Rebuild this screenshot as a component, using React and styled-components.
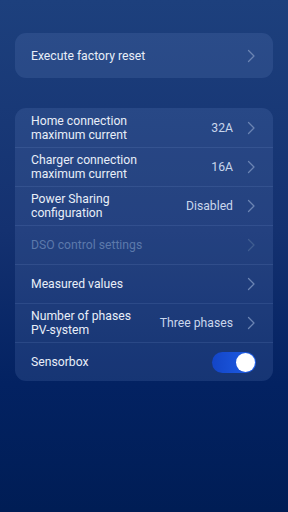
import React, { useState } from "react";
import styled, { createGlobalStyle } from "styled-components";

const GlobalStyle = createGlobalStyle`
  html, body {
    margin: 0;
    padding: 0;
  }
  body {
    font-family: Roboto, "Liberation Sans", sans-serif;
    -webkit-font-smoothing: antialiased;
  }
`;

const Screen = styled.div`
  width: 288px;
  height: 512px;
  box-sizing: border-box;
  padding: 33px 15px 0;
  background: linear-gradient(180deg, #1d407d 0%, #143170 45%, #032262 75%, #001d55 100%);
  display: flex;
  flex-direction: column;
  gap: 30px;
`;

const Card = styled.div`
  background: rgba(120, 150, 210, 0.17);
  border-radius: 11px;
  overflow: hidden;
  display: flex;
  flex-direction: column;
`;

const Row = styled.div`
  height: ${(p) => p.$h || 39}px;
  box-sizing: border-box;
  display: flex;
  align-items: center;
  padding: 0 17px 0 16px;
  border-top: ${(p) => (p.$first ? "none" : "1px solid rgba(140, 170, 225, 0.14)")};
  color: ${(p) => (p.$disabled ? "#5c79ab" : "#e8eef8")};
  font-size: 12.2px;
  line-height: 14px;
`;

const Label = styled.div`
  flex: 1;
`;

const Value = styled.div`
  color: ${(p) => (p.$disabled ? "#5c79ab" : "#c9d6ec")};
  margin-right: 14px;
`;

const Chevron = styled.svg`
  width: 9px;
  height: 14px;
  flex-shrink: 0;
`;

const Track = styled.button`
  width: 44px;
  height: 21px;
  border: none;
  padding: 0;
  border-radius: 11px;
  background: linear-gradient(90deg, #1345c7, #1f5fe8);
  position: relative;
  cursor: pointer;
`;

const Knob = styled.span`
  position: absolute;
  top: 1px;
  left: ${(p) => (p.$on ? "24px" : "1px")};
  width: 19px;
  height: 19px;
  border-radius: 50%;
  background: #ffffff;
`;

const Arrow = ({ disabled }) => (
  <Chevron viewBox="0 0 9 14">
    <path
      d="M1.5 1.5 L7 7 L1.5 12.5"
      fill="none"
      stroke={disabled ? "#3f5c90" : "#6b84b3"}
      strokeWidth="1.3"
      strokeLinecap="round"
      strokeLinejoin="round"
    />
  </Chevron>
);

const rows = [
  { label: ["Home connection", "maximum current"], value: "32A" },
  { label: ["Charger connection", "maximum current"], value: "16A" },
  { label: ["Power Sharing", "configuration"], value: "Disabled" },
  { label: ["DSO control settings"], disabled: true },
  { label: ["Measured values"] },
  { label: ["Number of phases", "PV-system"], value: "Three phases" },
];

export default function App() {
  const [on, setOn] = useState(true);
  return (
    <>
      <GlobalStyle />
      <Screen>
        <Card>
          <Row $first $h={45}>
            <Label>Execute factory reset</Label>
            <Arrow />
          </Row>
        </Card>
        <Card>
          {rows.map((r, i) => (
            <Row key={i} $first={i === 0} $disabled={r.disabled}>
              <Label>
                {r.label.map((l, j) => (
                  <div key={j}>{l}</div>
                ))}
              </Label>
              {r.value && <Value $disabled={r.disabled}>{r.value}</Value>}
              <Arrow disabled={r.disabled} />
            </Row>
          ))}
          <Row>
            <Label>Sensorbox</Label>
            <Track onClick={() => setOn(!on)}>
              <Knob $on={on} />
            </Track>
          </Row>
        </Card>
      </Screen>
    </>
  );
}
